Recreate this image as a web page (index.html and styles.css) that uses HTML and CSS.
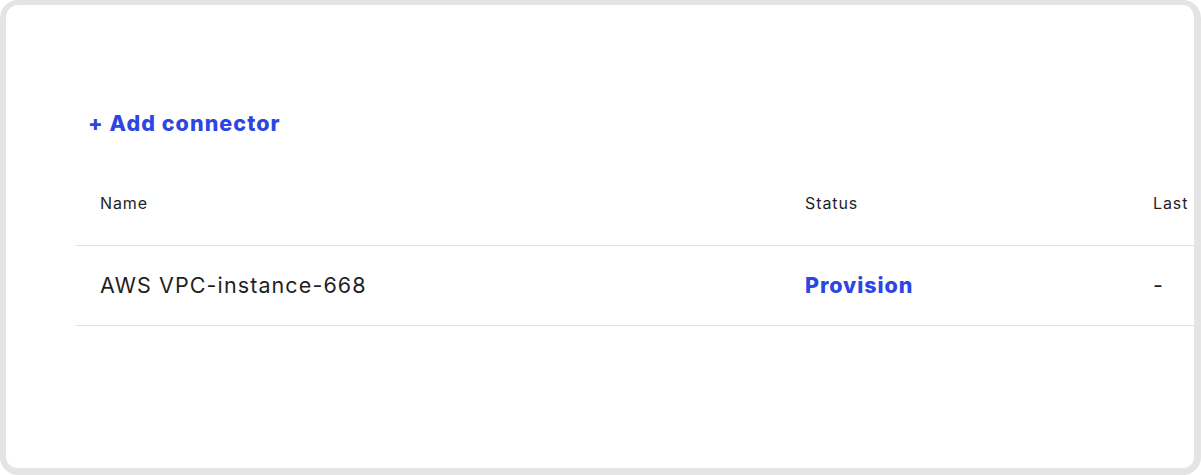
FILE: index.html
```html
<!DOCTYPE html>
<html>
<head>
<meta charset="utf-8">
<link rel="stylesheet" href="styles.css">
</head>
<body>
<div class="frame">
  <div class="content">
    <a class="add-link">+ Add connector</a>
    <div class="table">
      <div class="row head">
        <div class="cell c-name">Name</div>
        <div class="cell c-status">Status</div>
        <div class="cell c-last">Last</div>
      </div>
      <div class="row body">
        <div class="cell c-name">AWS VPC-instance-668</div>
        <div class="cell c-status status">Provision</div>
        <div class="cell c-last">-</div>
      </div>
    </div>
  </div>
</div>
</body>
</html>
```
FILE: styles.css
```css
* { box-sizing: border-box; }
html, body { margin: 0; padding: 0; background: #fff; }
body {
  width: 1201px;
  height: 475px;
  font-family: Inter, "Noto Sans", sans-serif;
  color: #1f1f1f;
}
.frame {
  width: 1201px;
  height: 475px;
  border: 6px solid #e4e4e4;
  border-width: 5px 7px 7px 6px;
  border-radius: 18px;
  overflow: hidden;
  background: #fff;
}
.content {
  padding: 106px 0 0 70px;
}
.add-link {
  display: block;
  padding-left: 12px;
  font-size: 21.5px;
  font-weight: 800;
  color: #2d46e2;
  line-height: 24px;
  letter-spacing: 1.05px;
}
.table {
  margin-top: 33px;
  width: 1300px;
}
.row {
  display: flex;
  align-items: center;
  border-bottom: 1px solid #e2e2e2;
}
.row.head { height: 78px; font-size: 16px; letter-spacing: 0.9px; padding-bottom: 8px; }
.row.body { height: 80px; font-size: 21.5px; letter-spacing: 1.1px; padding-bottom: 2px; }
.cell { padding-left: 24px; }
.c-name { width: 705px; }
.c-status { width: 348px; }
.c-last { flex: 1; }
.status { color: #2d46e2; font-weight: 800; letter-spacing: 0.9px; }
```
